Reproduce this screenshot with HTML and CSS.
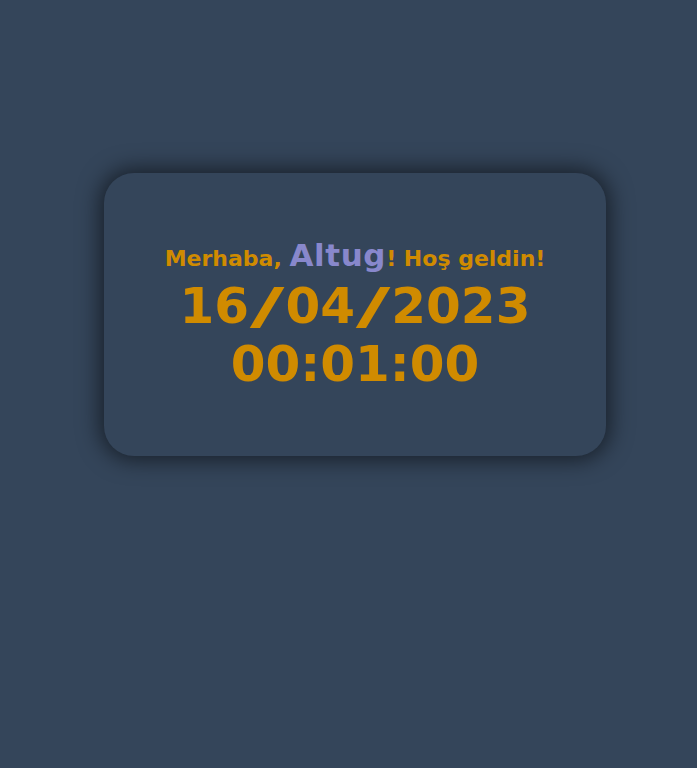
FILE: index.html
```html
<!DOCTYPE html>
<html lang="tr">
<head>
<meta charset="utf-8">
<link rel="stylesheet" href="styles.css">
<title>Saat</title>
</head>
<body>
<main class="page">
  <section class="card">
    <p class="greeting">Merhaba, <span class="name">Altug</span>! Hoş geldin!</p>
    <div class="date">16<span class="sep">/</span>04<span class="sep">/</span>2023</div>
    <div class="time">00:01:00</div>
  </section>
</main>
</body>
</html>
```
FILE: styles.css
```css
html, body {
  margin: 0;
  padding: 0;
  background: #34455a;
}
body {
  font-family: "DejaVu Sans", Verdana, sans-serif;
  min-height: 768px;
}
.page {
  padding-top: 173px;
  padding-left: 104px;
}
.card {
  box-sizing: border-box;
  width: 502px;
  height: 283px;
  padding-top: 4px;
  border-radius: 30px;
  background: #34455a;
  box-shadow: 0 0 22px 4px rgba(0, 0, 0, 0.55);
  display: flex;
  flex-direction: column;
  align-items: center;
  justify-content: center;
  color: #d08b00;
  font-weight: bold;
  text-align: center;
}
.greeting {
  margin: 0 0 3px;
  font-size: 22px;
  line-height: 30px;
}
.name {
  font-size: 31px;
  color: #8888cc;
  letter-spacing: 0.6px;
}
.date, .time {
  font-size: 50px;
  line-height: 58px;
}
.sep {
  display: inline-block;
  margin: 0 9px;
  transform: scaleX(1.9);
}
```
